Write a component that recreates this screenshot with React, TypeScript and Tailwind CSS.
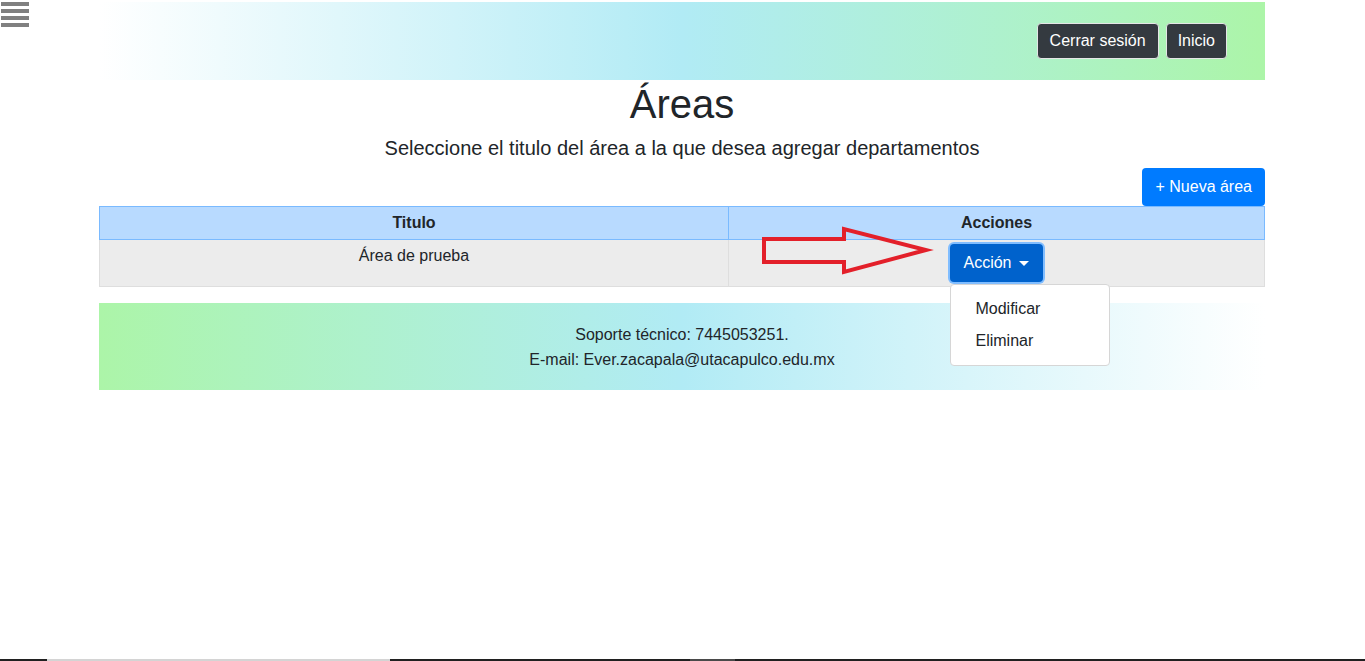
import { useState } from 'react';

const rows = [{ id: 1, titulo: 'Área de prueba' }];

export default function App() {
  const [openId] = useState<number | null>(1);

  return (
    <div className="relative h-[661px] flex flex-col bg-white font-['Liberation_Sans',Arial,sans-serif] text-[#212529] overflow-hidden">
      {/* menu toggle */}
      <button className="absolute left-[1px] top-[1px] w-[28px] flex flex-col gap-[3px] pt-[1px]">
        <span className="block h-[4px] bg-[#808080]" />
        <span className="block h-[4px] bg-[#808080]" />
        <span className="block h-[4px] bg-[#808080]" />
        <span className="block h-[4px] bg-[#808080]" />
      </button>

      <div className="w-[1166px] ml-[99px] pt-[2px]">
        <header className="h-[78px] flex items-center justify-end gap-[7px] pr-[38px] bg-gradient-to-r from-white via-[#b1ebf5] to-[#acf5a8]">
          <button className="h-[36px] px-[12px] rounded-[4px] border border-[#e4e5e6] bg-[#343a40] text-white text-[16px]">
            Cerrar sesión
          </button>
          <button className="h-[36px] px-[11px] rounded-[4px] border border-[#e4e5e6] bg-[#343a40] text-white text-[16px]">
            Inicio
          </button>
        </header>

        <h1 className="text-[40px] leading-[48px] text-center">Áreas</h1>
        <h5 className="mt-2 text-[20px] leading-[24px] text-center">
          Seleccione el titulo del área a la que desea agregar departamentos
        </h5>

        <div className="mt-2 flex justify-end">
          <button className="h-[38px] px-[13px] rounded-[4px] bg-[#007bff] text-white text-[16px]">
            + Nueva área
          </button>
        </div>

        <div className="relative">
          <table className="w-full border-collapse text-[16px] leading-[24px]">
            <thead>
              <tr className="bg-[#b8daff]">
                <th className="w-[629px] border border-[#7abaff] py-1 font-bold text-center">Titulo</th>
                <th className="border border-[#7abaff] py-1 font-bold text-center">Acciones</th>
              </tr>
            </thead>
            <tbody>
              {rows.map((r) => (
                <tr key={r.id} className="bg-[#ececec]">
                  <td className="border border-[#dedede] px-3 pt-1 pb-[18px] text-center align-top">{r.titulo}</td>
                  <td className="border border-[#dedede] pt-1 pb-[2px] text-center align-top">
                    <div className="relative inline-block">
                      <button className="h-[38px] pl-[13px] pr-[14px] rounded-[4px] bg-[#0062cc] text-white text-[16px] flex items-center shadow-[0_0_0_2px_#80bdff]">
                        Acción
                        <span className="ml-[7px] w-0 h-0 border-l-[5px] border-r-[5px] border-t-[5px] border-l-transparent border-r-transparent border-t-white" />
                      </button>
                      {openId === r.id && (
                        <div className="absolute left-0 top-[calc(100%+2px)] z-10 w-[160px] py-2 bg-white border border-[#d6d6d6] rounded-[4px] text-left">
                          <a className="block px-6 py-1 text-[16px] leading-[24px] text-[#212529]">Modificar</a>
                          <a className="block px-6 py-1 text-[16px] leading-[24px] text-[#212529]">Eliminar</a>
                        </div>
                      )}
                    </div>
                  </td>
                </tr>
              ))}
            </tbody>
          </table>

          {/* red arrow annotation */}
          <svg
            className="absolute left-[660px] top-[18px] pointer-events-none"
            width="176"
            height="54"
            viewBox="759 224 176 54"
          >
            <polygon
              points="764,239 844,239 844,229 926,250 844,272 844,262 764,262"
              fill="none"
              stroke="#e3202a"
              strokeWidth="4"
              strokeLinejoin="miter"
            />
          </svg>
        </div>

        <footer className="mt-[16px] h-[87px] flex flex-col justify-center text-center text-[16px] leading-[25px] bg-gradient-to-r from-[#acf5a8] via-[#b1ebf5] to-white">
          <p>Soporte técnico: 7445053251.</p>
          <p>E-mail: Ever.zacapala@utacapulco.edu.mx</p>
        </footer>
      </div>

      <div className="mt-auto h-[2px] flex bg-[#202020]">
        <div className="w-[47px]" />
        <div className="w-[343px] bg-[#d4d4d4]" />
        <div className="w-[300px]" />
        <div className="w-[45px] bg-[#4a4a4a]" />
      </div>
    </div>
  );
}
